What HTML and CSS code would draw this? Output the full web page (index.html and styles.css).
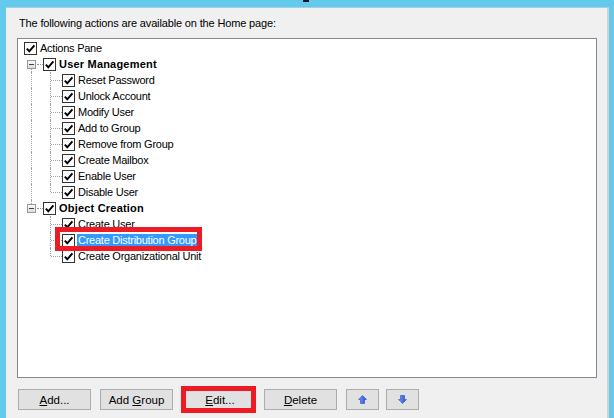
FILE: index.html
```html
<!DOCTYPE html>
<html>
<head>
<meta charset="utf-8">
<link rel="stylesheet" href="styles.css">
</head>
<body>
<div class="window">
  <div class="titlemark"></div>
  <div class="panel">
    <p class="caption">The following actions are available on the Home page:</p>
    <div class="tree">
      <div class="row"><span class="cb"><svg viewBox="0 0 11 11" width="11" height="11"><path d="M1.8 5.6 L4.3 8.3 L9.4 2.3" fill="none" stroke="#000" stroke-width="2"/></svg></span><span class="lbl">Actions Pane</span></div>
      <div class="row"><span class="cell exp-first"><span class="exp"></span></span><span class="cb"><svg viewBox="0 0 11 11" width="11" height="11"><path d="M1.8 5.6 L4.3 8.3 L9.4 2.3" fill="none" stroke="#000" stroke-width="2"/></svg></span><span class="lbl bold">User Management</span></div>
      <div class="row"><span class="cell vline"></span><span class="cell branch"></span><span class="cb"><svg viewBox="0 0 11 11" width="11" height="11"><path d="M1.8 5.6 L4.3 8.3 L9.4 2.3" fill="none" stroke="#000" stroke-width="2"/></svg></span><span class="lbl">Reset Password</span></div>
      <div class="row"><span class="cell vline"></span><span class="cell branch"></span><span class="cb"><svg viewBox="0 0 11 11" width="11" height="11"><path d="M1.8 5.6 L4.3 8.3 L9.4 2.3" fill="none" stroke="#000" stroke-width="2"/></svg></span><span class="lbl">Unlock Account</span></div>
      <div class="row"><span class="cell vline"></span><span class="cell branch"></span><span class="cb"><svg viewBox="0 0 11 11" width="11" height="11"><path d="M1.8 5.6 L4.3 8.3 L9.4 2.3" fill="none" stroke="#000" stroke-width="2"/></svg></span><span class="lbl">Modify User</span></div>
      <div class="row"><span class="cell vline"></span><span class="cell branch"></span><span class="cb"><svg viewBox="0 0 11 11" width="11" height="11"><path d="M1.8 5.6 L4.3 8.3 L9.4 2.3" fill="none" stroke="#000" stroke-width="2"/></svg></span><span class="lbl">Add to Group</span></div>
      <div class="row"><span class="cell vline"></span><span class="cell branch"></span><span class="cb"><svg viewBox="0 0 11 11" width="11" height="11"><path d="M1.8 5.6 L4.3 8.3 L9.4 2.3" fill="none" stroke="#000" stroke-width="2"/></svg></span><span class="lbl">Remove from Group</span></div>
      <div class="row"><span class="cell vline"></span><span class="cell branch"></span><span class="cb"><svg viewBox="0 0 11 11" width="11" height="11"><path d="M1.8 5.6 L4.3 8.3 L9.4 2.3" fill="none" stroke="#000" stroke-width="2"/></svg></span><span class="lbl">Create Mailbox</span></div>
      <div class="row"><span class="cell vline"></span><span class="cell branch"></span><span class="cb"><svg viewBox="0 0 11 11" width="11" height="11"><path d="M1.8 5.6 L4.3 8.3 L9.4 2.3" fill="none" stroke="#000" stroke-width="2"/></svg></span><span class="lbl">Enable User</span></div>
      <div class="row"><span class="cell vline"></span><span class="cell branch last"></span><span class="cb"><svg viewBox="0 0 11 11" width="11" height="11"><path d="M1.8 5.6 L4.3 8.3 L9.4 2.3" fill="none" stroke="#000" stroke-width="2"/></svg></span><span class="lbl">Disable User</span></div>
      <div class="row"><span class="cell exp-last"><span class="exp"></span></span><span class="cb"><svg viewBox="0 0 11 11" width="11" height="11"><path d="M1.8 5.6 L4.3 8.3 L9.4 2.3" fill="none" stroke="#000" stroke-width="2"/></svg></span><span class="lbl bold">Object Creation</span></div>
      <div class="row"><span class="cell"></span><span class="cell branch"></span><span class="cb"><svg viewBox="0 0 11 11" width="11" height="11"><path d="M1.8 5.6 L4.3 8.3 L9.4 2.3" fill="none" stroke="#000" stroke-width="2"/></svg></span><span class="lbl">Create User</span></div>
      <div class="row"><span class="cell"></span><span class="cell branch"></span><span class="cb"><svg viewBox="0 0 11 11" width="11" height="11"><path d="M1.8 5.6 L4.3 8.3 L9.4 2.3" fill="none" stroke="#000" stroke-width="2"/></svg></span><span class="lbl sel">Create Distribution Group</span></div>
      <div class="row"><span class="cell"></span><span class="cell branch last"></span><span class="cb"><svg viewBox="0 0 11 11" width="11" height="11"><path d="M1.8 5.6 L4.3 8.3 L9.4 2.3" fill="none" stroke="#000" stroke-width="2"/></svg></span><span class="lbl">Create Organizational Unit</span></div>
    </div>
    <div class="buttons">
      <button class="btn w73"><u>A</u>dd...</button>
      <button class="btn w73 gap9"><span>Add <u>G</u>roup</span></button>
      <button class="btn w70 gap12"><u>E</u>dit...</button>
      <button class="btn w73 gap9"><u>D</u>elete</button>
      <button class="btn w33 gap9"><svg viewBox="0 0 9 9" width="9" height="9"><defs><linearGradient id="ga" x1="0" y1="0" x2="1" y2="0"><stop offset="0" stop-color="#7aa0ff"/><stop offset="1" stop-color="#2446c8"/></linearGradient></defs><path d="M4.5 0.5 L8.5 4.5 L6.5 4.5 L6.5 8.5 L2.5 8.5 L2.5 4.5 L0.5 4.5 Z" fill="url(#ga)" stroke="#2a4bc4" stroke-width="0.6"/></svg></button>
      <button class="btn w33 gap7"><svg viewBox="0 0 9 9" width="9" height="9"><defs><linearGradient id="gb" x1="0" y1="0" x2="1" y2="0"><stop offset="0" stop-color="#7aa0ff"/><stop offset="1" stop-color="#2446c8"/></linearGradient></defs><path d="M4.5 8.5 L8.5 4.5 L6.5 4.5 L6.5 0.5 L2.5 0.5 L2.5 4.5 L0.5 4.5 Z" fill="url(#gb)" stroke="#2a4bc4" stroke-width="0.6"/></svg></button>
    </div>
  </div>
  <div class="annot annot-item"></div>
  <div class="annot annot-edit"></div>
</div>
</body>
</html>
```

FILE: styles.css
```css
html, body {
  margin: 0;
  padding: 0;
}
body {
  width: 614px;
  height: 418px;
  overflow: hidden;
  background: #64caec;
  font-family: "Liberation Sans", Arial, sans-serif;
  font-size: 11px;
  color: #000;
}
.window {
  position: relative;
  width: 614px;
  height: 418px;
  box-sizing: border-box;
  padding: 7px 5px 0 6px;
}
.titlemark {
  position: absolute;
  left: 303px;
  top: 0;
  width: 6px;
  height: 2px;
  background: #101030;
}
.panel {
  height: 411px;
  box-sizing: border-box;
  background: #f0f0f0;
  border-top: 1px solid #a8cfe0;
  border-right: 2px solid #c9d3d9;
  padding: 0 0 0 11px;
}
.caption {
  margin: 8px 0 0 2px;
  height: 15px;
  line-height: 15px;
  white-space: nowrap;
  letter-spacing: -0.15px;
}
.tree {
  margin-top: 7px;
  width: 580px;
  height: 340px;
  box-sizing: border-box;
  border: 1px solid #828790;
  background: #fff;
  padding: 1px 0 0 4px;
}
.row {
  display: flex;
  align-items: center;
  height: 16px;
  white-space: nowrap;
}
.cell {
  flex: none;
  width: 19px;
  height: 16px;
  position: relative;
}
.vline::before,
.branch::before {
  content: "";
  position: absolute;
  left: 9px;
  top: 0;
  bottom: 0;
  border-left: 1px dotted #a0a0a0;
}
.branch.last::before {
  bottom: 8px;
}
.branch::after {
  content: "";
  position: absolute;
  left: 10px;
  top: 8px;
  width: 11px;
  border-top: 1px dotted #a0a0a0;
}
.exp {
  position: absolute;
  left: 5px;
  top: 4px;
  width: 9px;
  height: 9px;
  box-sizing: border-box;
  border: 1px solid #9a9a9a;
  background: linear-gradient(#fafafa, #dcdcdc);
}
.exp::after {
  content: "";
  position: absolute;
  left: 1px;
  top: 3px;
  width: 5px;
  height: 1px;
  background: #444;
}
.exp-first::before {
  content: "";
  position: absolute;
  left: 9px;
  top: 13px;
  bottom: 0;
  border-left: 1px dotted #a0a0a0;
}
.exp-last::before {
  content: "";
  position: absolute;
  left: 9px;
  top: 0;
  height: 4px;
  border-left: 1px dotted #a0a0a0;
}
.exp-first::after,
.exp-last::after {
  content: "";
  position: absolute;
  left: 15px;
  top: 8px;
  width: 6px;
  border-top: 1px dotted #a0a0a0;
}
.cb {
  flex: none;
  width: 13px;
  height: 13px;
  box-sizing: border-box;
  margin-left: 2px;
  border: 1px solid #333;
  background: #fff;
  display: flex;
  align-items: center;
  justify-content: center;
}
.cb svg {
  display: block;
}
.lbl {
  margin-left: 3px;
  line-height: 14px;
  letter-spacing: -0.25px;
}
.bold {
  font-weight: bold;
  letter-spacing: 0.2px;
}
.sel {
  margin-left: 2px;
  padding: 0 1px;
  line-height: 13px;
  background: #3399ff;
  color: #fff;
}
.buttons {
  display: flex;
  margin-top: 11px;
  padding-left: 1px;
}
.btn {
  height: 21px;
  box-sizing: border-box;
  border: 1px solid #adadad;
  background: #e1e1e1;
  font-family: "Liberation Sans", Arial, sans-serif;
  font-size: 11.5px;
  color: #000;
  padding: 0;
  margin: 0;
  display: flex;
  align-items: center;
  justify-content: center;
}
.btn svg {
  display: block;
}
.w73 { width: 73px; }
.w70 { width: 70px; }
.w33 { width: 33px; }
.gap7 { margin-left: 7px; }
.gap9 { margin-left: 9px; }
.gap12 { margin-left: 12px; }
.annot {
  position: absolute;
  box-sizing: border-box;
  border: 5px solid #ed1c24;
}
.annot-item {
  left: 55px;
  top: 227px;
  width: 147px;
  height: 24px;
}
.annot-edit {
  left: 181px;
  top: 386px;
  width: 75px;
  height: 27px;
}
```
